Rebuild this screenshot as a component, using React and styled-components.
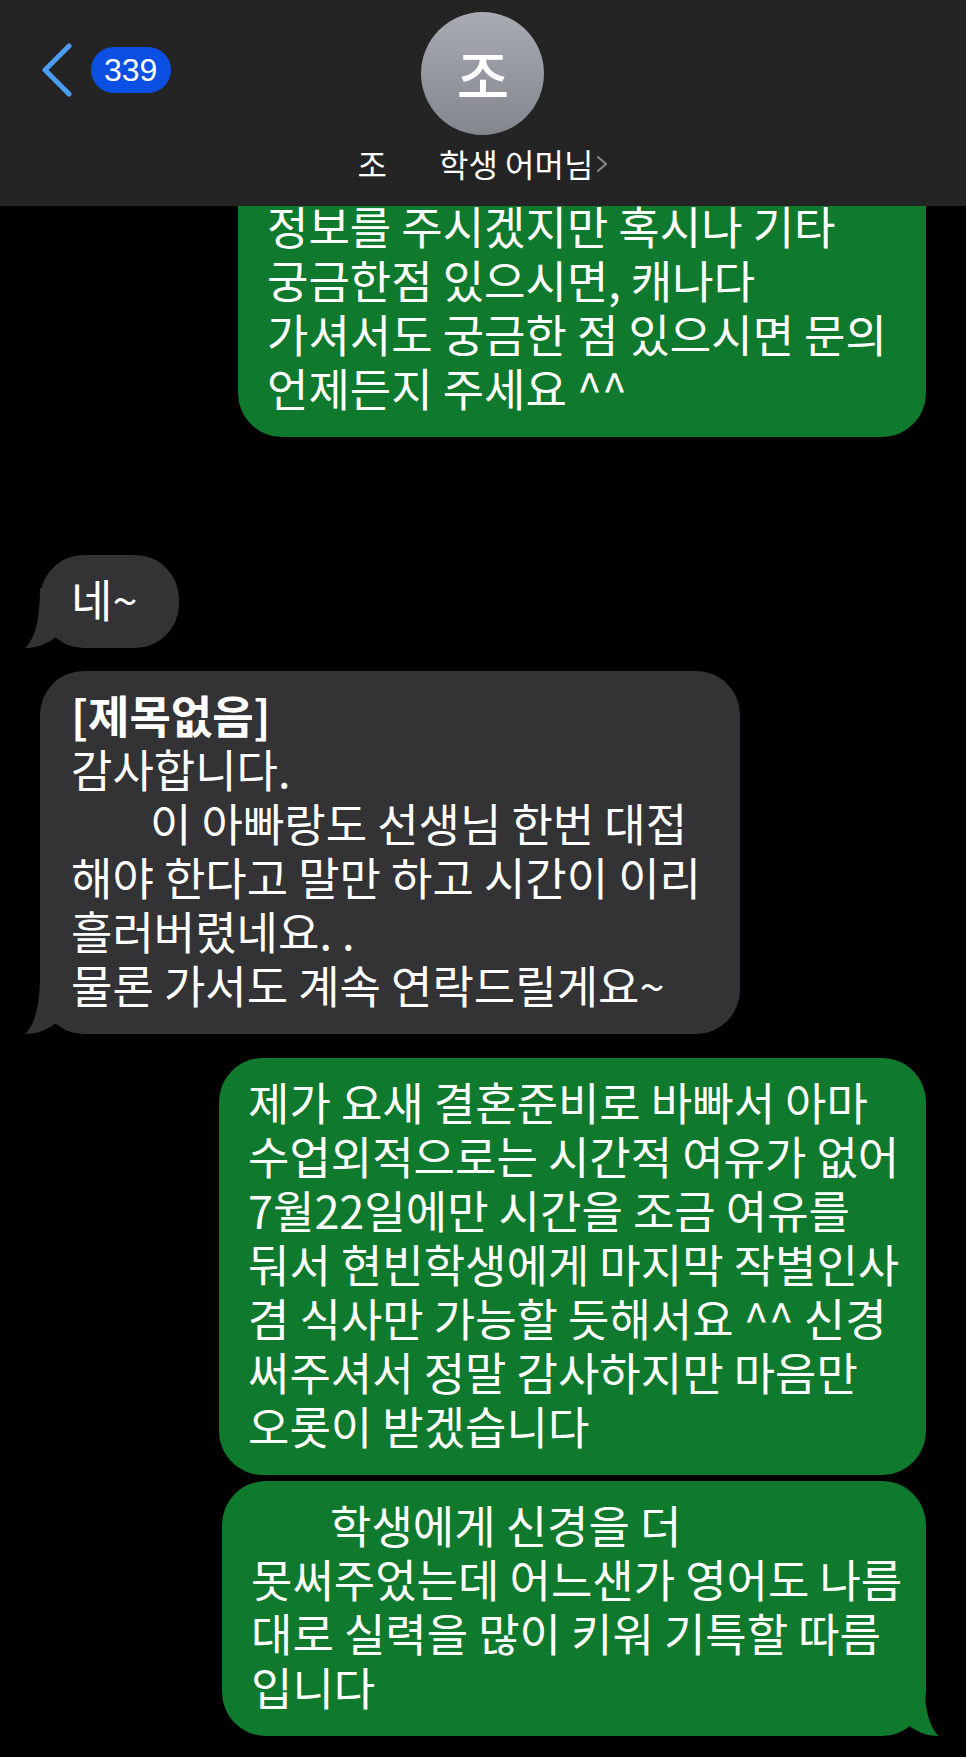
import React from "react";
import styled, { createGlobalStyle } from "styled-components";

const GREEN = "#0f7a2d";
const GRAY = "#333335";

const GlobalStyle = createGlobalStyle`
  html, body { margin: 0; padding: 0; background: #000; }
  body { font-family: "Noto Sans CJK KR", "Noto Sans", sans-serif; }
`;

const Screen = styled.div`
  width: 966px;
  height: 1757px;
  background: #000;
  display: flex;
  flex-direction: column;
  overflow: hidden;
`;

const Header = styled.header`
  flex: none;
  height: 206px;
  background: #242424;
  display: grid;
  grid-template-columns: 1fr auto 1fr;
  position: relative;
  z-index: 1;
`;

const BackRow = styled.div`
  display: flex;
  align-items: center;
  gap: 18px;
  padding: 43px 0 0 41px;
  align-self: start;
`;

const BackChevron = styled.svg`
  width: 32px;
  height: 54px;
  display: block;
`;

const Badge = styled.div`
  height: 46px;
  padding: 0 14px 0 13px;
  border-radius: 23px;
  background: #0b50e3;
  color: #fff;
  font-family: "Liberation Sans", Arial, sans-serif;
  font-size: 32px;
  line-height: 46px;
`;

const Contact = styled.div`
  display: flex;
  flex-direction: column;
  align-items: center;
  padding-top: 12px;
`;

const Avatar = styled.div`
  width: 123px;
  height: 123px;
  border-radius: 50%;
  background: linear-gradient(180deg, #a9abb3 0%, #84868e 100%);
  display: flex;
  align-items: center;
  justify-content: center;
  color: #fff;
  font-size: 57px;
  font-weight: 500;
  line-height: 1;
`;

const NameRow = styled.div`
  margin-top: 9px;
  display: flex;
  align-items: center;
  gap: 52px;
  color: #fff;
  font-size: 32px;
  line-height: 38px;
`;

const NameTail = styled.span`
  display: flex;
  align-items: center;
  gap: 3px;
`;

const SmallChevron = styled.svg`
  width: 12px;
  height: 18px;
  display: block;
  margin-top: 2px;
`;

const Chat = styled.main`
  flex: 1;
  min-height: 0;
  display: flex;
  flex-direction: column;
  padding: 0 40px;
  overflow: hidden;
`;

const Bubble = styled.div`
  position: relative;
  box-sizing: border-box;
  flex: none;
  width: ${(p) => p.$width}px;
  margin-top: ${(p) => p.$gap}px;
  align-self: ${(p) => (p.$me ? "flex-end" : "flex-start")};
  background: ${(p) => (p.$me ? GREEN : GRAY)};
  color: #fff;
  border-radius: ${(p) => (p.$clipped ? "0 0 44px 44px" : "44px")};
  padding: ${(p) => (p.$clipped ? "0" : "17px")} 16px 22px
    ${(p) => (p.$me ? "29px" : "31px")};
  font-size: 45px;
  line-height: 54px;
  white-space: pre;
  tab-size: 79px;
`;

const Subject = styled.span`
  font-weight: 600;
`;

const TailSvg = styled.svg`
  position: absolute;
  bottom: 0;
  width: 34px;
  height: 60px;
  ${(p) => (p.$me ? "right: -13px; transform: scaleX(-1);" : "left: -15px;")}
`;

const Tail = ({ me }) => (
  <TailSvg $me={me} viewBox="0 0 34 60" aria-hidden="true">
    <path
      d="M15 0 C15 34 9 52 0 60 C12 60 24 56 34 46 L34 0 Z"
      fill={me ? GREEN : GRAY}
    />
  </TailSvg>
);

export default function App() {
  return (
    <>
      <GlobalStyle />
      <Screen>
        <Header>
          <BackRow>
            <BackChevron viewBox="0 0 32 54" aria-hidden="true">
              <polyline
                points="28,3 4,27 28,51"
                fill="none"
                stroke="#4a9df2"
                strokeWidth="5"
                strokeLinecap="round"
                strokeLinejoin="round"
              />
            </BackChevron>
            <Badge>339</Badge>
          </BackRow>
          <Contact>
            <Avatar>조</Avatar>
            <NameRow>
              <span>조</span>
              <NameTail>
                <span>학생 어머님</span>
                <SmallChevron viewBox="0 0 12 18" aria-hidden="true">
                  <polyline
                    points="2,2 10,9 2,16"
                    fill="none"
                    stroke="#8a8a8e"
                    strokeWidth="2"
                    strokeLinecap="round"
                    strokeLinejoin="round"
                  />
                </SmallChevron>
              </NameTail>
            </NameRow>
          </Contact>
          <div />
        </Header>
        <Chat>
          <Bubble $me $clipped $width={688} $gap={-7}>
            {`정보를 주시겠지만 혹시나 기타
궁금한점 있으시면, 캐나다
가셔서도 궁금한 점 있으시면 문의
언제든지 주세요 ^^`}
          </Bubble>

          <Bubble $width={139} $gap={118}>
            {`네~`}
            <Tail />
          </Bubble>

          <Bubble $width={700} $gap={23}>
            <Subject>[제목없음]</Subject>
            {`
감사합니다.
\t이 아빠랑도 선생님 한번 대접
해야 한다고 말만 하고 시간이 이리
흘러버렸네요. .
물론 가서도 계속 연락드릴게요~`}
            <Tail />
          </Bubble>

          <Bubble $me $width={707} $gap={24}>
            {`제가 요새 결혼준비로 바빠서 아마
수업외적으로는 시간적 여유가 없어
7월22일에만 시간을 조금 여유를
둬서 현빈학생에게 마지막 작별인사
겸 식사만 가능할 듯해서요 ^^ 신경
써주셔서 정말 감사하지만 마음만
오롯이 받겠습니다`}
          </Bubble>

          <Bubble $me $width={704} $gap={6}>
            {`\t학생에게 신경을 더
못써주었는데 어느샌가 영어도 나름
대로 실력을 많이 키워 기특할 따름
입니다`}
            <Tail me />
          </Bubble>
        </Chat>
      </Screen>
    </>
  );
}
